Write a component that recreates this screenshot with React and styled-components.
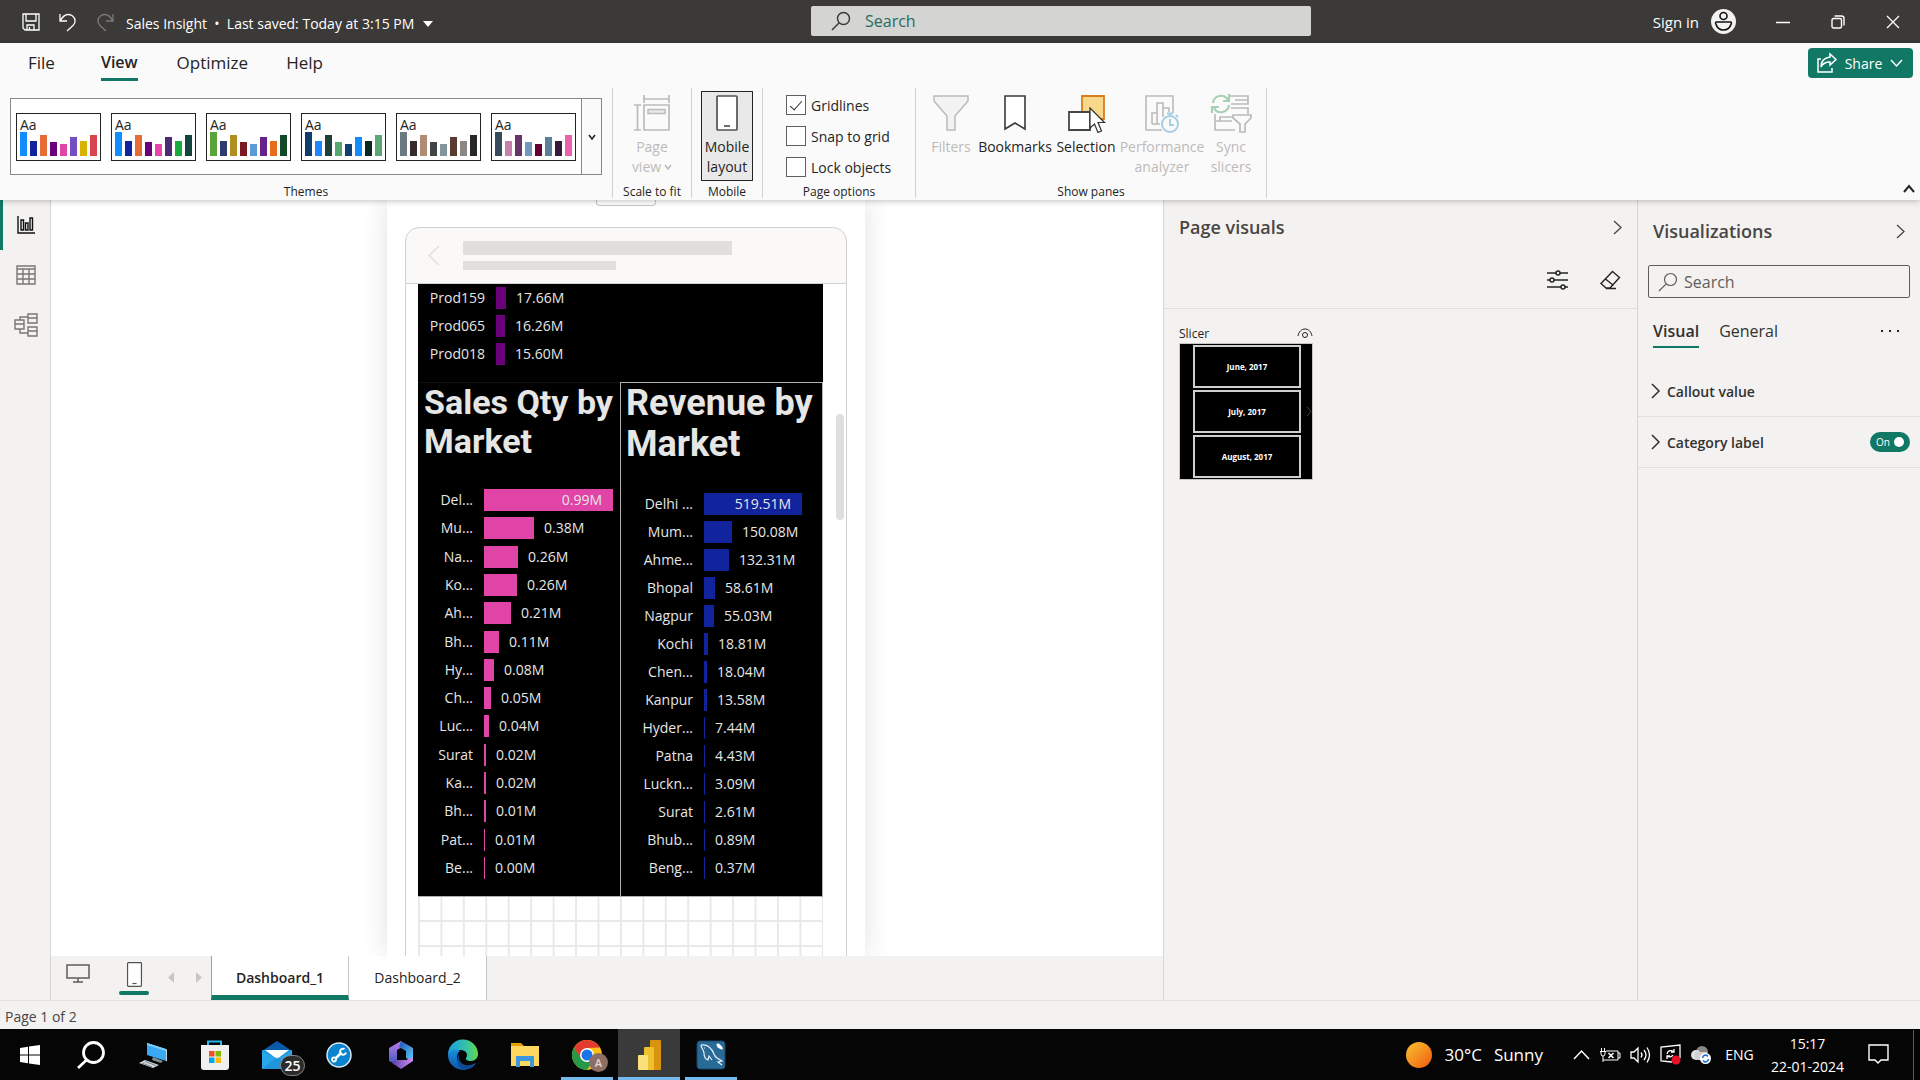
import React from "react";
import styled, { createGlobalStyle, css } from "styled-components";

const GlobalStyle = createGlobalStyle`
  *, *::before, *::after { box-sizing: border-box; }
  html, body { margin: 0; padding: 0; }
  body { overflow: hidden; }
  body, button, input { font-family: "Open Sans", "Noto Sans", sans-serif; }
  button { border: 0; background: none; padding: 0; margin: 0; color: inherit; font-size: inherit; cursor: pointer; }
  ul, h1, h2, h3, p { margin: 0; padding: 0; list-style: none; font-weight: 400; }
`;

const GREEN = "#117865";

const Icon = styled.svg.attrs((p) => ({
  width: p.$w,
  height: p.$h ?? p.$w,
  viewBox: p.viewBox ?? `0 0 ${p.$w} ${p.$h ?? p.$w}`,
  "aria-hidden": true,
}))`
  display: block;
  flex: none;
  overflow: visible;
  fill: none;
  stroke: currentColor;
  stroke-width: ${(p) => p.$s ?? 1};
`;

const Screen = styled.div`
  display: flex;
  flex-direction: column;
  height: 100vh;
  color: #252423;
  background: #f3f2f1;
  font-size: 14px;
`;

/* ---------- title bar ---------- */

const TitleBar = styled.header`
  display: grid;
  grid-template-columns: 1fr 500px 609px;
  align-items: center;
  height: 43px;
  flex: none;
  padding-left: 22px;
  background: #3b3a38;
  color: #fff;
`;

const QuickAccess = styled.div`
  display: flex;
  align-items: center;
  gap: 19px;
  font-size: 14px;
  line-height: 20px;
`;

const QuickButton = styled.button`
  color: ${(p) => (p.$muted ? "#7d7b79" : "#fff")};
`;

const FileButton = styled.button`
  display: flex;
  align-items: center;
  gap: 8px;
  margin-left: -7px;
  padding-top: 4px;
  color: #fff;
  white-space: nowrap;
`;

const AppSearch = styled.label`
  display: flex;
  align-items: center;
  gap: 14px;
  height: 30px;
  padding: 0 20px;
  margin: 0 0 2px;
  border-radius: 2px;
  background: #d4d4d2;
  color: #3b3a38;
`;

const SearchInput = styled.input`
  flex: 1;
  min-width: 0;
  padding: 0;
  border: 0;
  outline: 0;
  background: none;
  font-size: 16px;
  color: #323130;
  &::placeholder { color: ${(p) => p.$hint}; opacity: 1; }
`;

const WindowTools = styled.div`
  display: flex;
  align-items: center;
  justify-content: flex-end;
`;

const SignIn = styled.button`
  display: flex;
  align-items: center;
  gap: 12px;
  margin-right: 19px;
  color: #fff;
  font-size: 15px;
`;

const WindowButton = styled.button`
  display: grid;
  place-items: center;
  width: 55px;
  height: 43px;
  color: #fff;
`;

/* ---------- ribbon ---------- */

const Ribbon = styled.section`
  position: relative;
  z-index: 2;
  flex: none;
  height: 157px;
  background: #fafafa;
  box-shadow: 0 1px 6px rgba(0, 0, 0, 0.25);
`;

const RibbonTop = styled.div`
  display: flex;
  align-items: flex-start;
  justify-content: space-between;
  height: 45px;
  padding: 0 7px 0 28px;
`;

const RibbonTabs = styled.nav`
  display: flex;
`;

const RibbonTab = styled.button`
  height: 38px;
  margin-right: ${(p) => p.$after ?? 0}px;
  padding-top: 3px;
  border-bottom: 3px solid ${(p) => (p.$active ? GREEN : "transparent")};
  font-size: ${(p) => (p.$active ? 16 : 17)}px;
  font-weight: ${(p) => (p.$active ? 600 : 400)};
  color: #252423;
`;

const ShareButton = styled.button`
  display: flex;
  align-items: center;
  justify-content: space-between;
  width: 105px;
  height: 30px;
  margin-top: 5px;
  padding: 0 10px 0 9px;
  border-radius: 4px;
  background: ${GREEN};
  color: #fff;
  font-size: 14px;
`;

const RibbonBody = styled.div`
  display: flex;
  height: 112px;
`;

const Group = styled.section`
  display: flex;
  flex-direction: column;
  justify-content: space-between;
  width: ${(p) => p.$w}px;
  height: 110px;
  border-right: 1px solid #d2d0ce;
`;

const GroupBody = styled.div`
  display: flex;
  justify-content: center;
  gap: 1px;
  padding-top: ${(p) => p.$top ?? 3}px;
`;

const Caption = styled.h3`
  margin-bottom: -2px;
  font-size: 12px;
  line-height: 16px;
  text-align: center;
  white-space: nowrap;
`;

const Gallery = styled.div`
  display: flex;
  height: 77px;
  border: 1px solid #8a8886;
  background: #fff;
`;

const Swatches = styled.div`
  display: flex;
  align-items: center;
  gap: 10px;
  padding: 0 5px;
`;

const Swatch = styled.button`
  width: 85px;
  height: 48px;
  padding: 4px 3px;
  border: 1px solid #252423;
  background: #fff;
  text-align: left;
`;

const SwatchText = styled.span`
  display: block;
  height: 14px;
  font-size: 14px;
  line-height: 14px;
`;

const SwatchBars = styled.span`
  display: flex;
  align-items: flex-end;
  gap: 3px;
  height: 24px;
`;

const SwatchBar = styled.span`
  width: 7px;
`;

const GalleryMore = styled.button`
  display: grid;
  place-items: center;
  width: 20px;
  border-left: 1px solid #8a8886;
  background: #fafafa;
`;

const ToolButton = styled.button`
  position: relative;
  display: flex;
  flex-direction: column;
  align-items: center;
  gap: 6px;
  width: ${(p) => p.$w}px;
  height: 90px;
  padding-top: 3px;
  border: 1px solid ${(p) => (p.$pressed ? "#252423" : "transparent")};
  background: ${(p) => (p.$pressed ? "#e9e9e9" : "transparent")};
  color: ${(p) => (p.disabled ? "#bdbbb9" : "#252423")};
  font-size: 14px;
  line-height: 20px;
`;

const ToolLabel = styled.span`
  display: flex;
  flex-direction: column;
  align-items: center;
  white-space: nowrap;
`;

const WithChevron = styled.span`
  display: flex;
  align-items: center;
  gap: 3px;
`;

const Pointer = styled.span`
  position: absolute;
  left: 34px;
  top: 15px;
`;

const Options = styled.div`
  display: flex;
  flex-direction: column;
  gap: 11px;
  padding: 7px 0 0 23px;
`;

const Option = styled.label`
  display: flex;
  align-items: center;
  gap: 5px;
  height: 20px;
  font-size: 14px;
  white-space: nowrap;
`;

const Tick = styled.input`
  appearance: none;
  width: 20px;
  height: 20px;
  margin: 0;
  border: 1px solid #605e5c;
  background: #fff;
  display: grid;
  place-items: center;
  &:checked::before {
    content: "";
    width: 6px;
    height: 12px;
    margin-top: -3px;
    border: solid #323130;
    border-width: 0 1px 1px 0;
    transform: rotate(42deg);
  }
`;

const Collapse = styled.button`
  margin: auto 5px 7px auto;
`;

/* ---------- workspace ---------- */

const Workspace = styled.main`
  display: flex;
  flex: 1;
  min-height: 0;
  border-bottom: 1px solid #e1dfdd;
`;

const Rail = styled.nav`
  display: flex;
  flex-direction: column;
  width: 51px;
  border-right: 1px solid #d8d6d4;
`;

const RailButton = styled.button`
  display: grid;
  place-items: center;
  height: 50px;
  border-left: 3px solid ${(p) => (p.$active ? GREEN : "transparent")};
  padding: 0 2px 1px 0;
  color: ${(p) => (p.$active ? "#111" : "#797775")};
`;

const Center = styled.section`
  display: flex;
  flex: 1;
  flex-direction: column;
  min-width: 0;
`;

const Canvas = styled.div`
  display: flex;
  flex: 1;
  justify-content: center;
  min-height: 0;
  padding-left: 38px;
  overflow: hidden;
  background: #fff;
`;

const Sheet = styled.div`
  display: flex;
  flex-direction: column;
  width: 478px;
  padding: 0 18px;
  background: #fff;
  box-shadow: 0 0 26px rgba(0, 0, 0, 0.12);
`;

const SheetHandle = styled.div`
  align-self: center;
  width: 60px;
  height: 6px;
  margin-bottom: 21px;
  border: 1px solid #c8c6c4;
  border-top: 0;
  border-radius: 0 0 4px 4px;
`;

const PhoneHeader = styled.div`
  display: flex;
  align-items: center;
  gap: 23px;
  height: 57px;
  flex: none;
  padding-left: 22px;
  border: 1px solid #d2d0ce;
  border-radius: 14px 14px 0 0;
  background: #faf9f8;
  color: #e1dfdd;
`;

const Placeholders = styled.div`
  display: flex;
  flex-direction: column;
  gap: 6px;
`;

const Placeholder = styled.div`
  width: ${(p) => p.$w}px;
  height: ${(p) => p.$h}px;
  background: #e1dfdd;
`;

const PhoneBody = styled.div`
  display: flex;
  flex: 1;
  min-height: 0;
  gap: 13px;
  padding: 0 2px 0 12px;
  border: solid #d2d0ce;
  border-width: 0 1px;
`;

const Report = styled.div`
  display: flex;
  flex: 1;
  flex-direction: column;
`;

const ScrollThumb = styled.div`
  width: 8px;
  height: 106px;
  margin-top: 130px;
  border-radius: 4px;
  background: #e1dfdd;
`;

const Products = styled.div`
  height: 98px;
  background: #000;
`;

const MarketRow = styled.div`
  display: grid;
  grid-template-columns: 202px 1fr;
  height: 515px;
  border-top: 1px solid #111;
  border-bottom: 1px solid #b3b0ad;
  background: #000;
`;

const MarketCard = styled.section`
  display: flex;
  flex-direction: column;
  justify-content: space-between;
  padding-bottom: 14px;
  ${(p) =>
    p.$selected &&
    css`
      border: solid #b3b0ad;
      border-width: 1px 1px 0;
      margin-top: -1px;
    `}
`;

const ChartTitle = styled.h2`
  padding-left: ${(p) => (p.$large ? 5 : 6)}px;
  font-family: Roboto, sans-serif;
  font-weight: 700;
  font-size: ${(p) => (p.$large ? 36 : 34)}px;
  line-height: ${(p) => (p.$large ? 41 : 39)}px;
  color: #e6e6e6;
`;

const BarList = styled.ul`
  display: flex;
  flex-direction: column;
  height: ${(p) => p.$h}px;
`;

const BarRow = styled.li`
  display: flex;
  flex: 1;
  align-items: center;
  gap: 10px;
  color: #e6e6e6;
  font-size: 14px;
  line-height: 20px;
  white-space: nowrap;
`;

const BarLabel = styled.span`
  width: ${(p) => p.$w}px;
  padding-right: 1px;
  text-align: right;
`;

const Bar = styled.span`
  display: flex;
  align-items: center;
  justify-content: flex-end;
  height: 22px;
  padding-right: ${(p) => (p.$inside ? 11 : 0)}px;
  background: ${(p) => p.$color};
`;

const SnapGrid = styled.div`
  flex: 1;
  background-image:
    linear-gradient(to right, #e9e9e9 2px, transparent 2px),
    linear-gradient(to top, #e9e9e9 2px, transparent 2px);
  background-size: calc(100% / 18) 25px;
  border-right: 1px solid #e9e9e9;
`;

/* ---------- page tabs ---------- */

const PageBar = styled.div`
  display: flex;
  height: 44px;
  flex: none;
  align-items: stretch;
  color: #605e5c;
`;

const ViewButton = styled.button`
  display: flex;
  flex-direction: column;
  align-items: center;
  width: ${(p) => p.$w}px;
  padding-top: ${(p) => p.$top}px;
  gap: 4px;
`;

const Underline = styled.span`
  width: 30px;
  height: 4px;
  border-radius: 2px;
  background: ${GREEN};
`;

const Arrows = styled.div`
  display: flex;
  align-items: center;
  gap: 22px;
  padding: 0 9px 2px 5px;
  color: #c8c6c4;
`;

const PageTab = styled.button`
  width: 138px;
  padding: ${(p) => (p.$active ? "4px 0 0" : "0 0 1px")};
  border-right: 1px solid #c8c6c4;
  border-left: ${(p) => (p.$active ? "1px solid #a19f9d" : "0")};
  border-bottom: ${(p) => (p.$active ? `5px solid ${GREEN}` : "0")};
  background: #fff;
  color: #252423;
  font-size: 14px;
  font-weight: ${(p) => (p.$active ? 600 : 400)};
`;

/* ---------- side panes ---------- */

const Pane = styled.aside`
  display: flex;
  flex-direction: column;
  width: ${(p) => p.$w}px;
  flex: none;
  border-left: 1px solid #d8d6d4;
`;

const PaneHeader = styled.div`
  display: flex;
  align-items: center;
  justify-content: space-between;
  height: ${(p) => p.$h}px;
  padding: 0 15px 3px;
  color: #484644;
`;

const PaneTitle = styled.h2`
  font-size: 18px;
  font-weight: 600;
`;

const PaneTools = styled.div`
  display: flex;
  align-items: flex-start;
  justify-content: flex-end;
  gap: 32px;
  height: 52px;
  padding: 13px 16px 0;
  border-bottom: 1px solid #e1dfdd;
`;

const VisualTile = styled.figure`
  width: 134px;
  margin: 15px 0 0 15px;
`;

const TileCaption = styled.figcaption`
  display: flex;
  align-items: center;
  justify-content: space-between;
  height: 19px;
  font-size: 12px;
`;

const SlicerCard = styled.div`
  position: relative;
  display: flex;
  flex-direction: column;
  gap: 2px;
  padding: 1px 11px 1px 13px;
  border: 1px solid #c8c6c4;
  background: #000;
  color: #fff;
`;

const SlicerItem = styled.button`
  height: 43px;
  border: 2px solid #cfcfcf;
  font-size: 8px;
  font-weight: 700;
`;

const SlicerNext = styled.span`
  position: absolute;
  right: 0;
  top: 62px;
  color: #484644;
`;

const PaneSearch = styled.label`
  display: flex;
  align-items: center;
  gap: 6px;
  height: 33px;
  margin: 0 10px;
  padding: 0 9px;
  border: 1px solid #605e5c;
  border-radius: 2px;
  color: #605e5c;
`;

const PaneTabs = styled.div`
  display: flex;
  align-items: flex-start;
  gap: 20px;
  height: 68px;
  padding: 18px 20px 0 15px;
`;

const PaneTab = styled.button`
  height: 32px;
  border-bottom: 2px solid ${(p) => (p.$active ? GREEN : "transparent")};
  font-size: 16px;
  font-weight: ${(p) => (p.$active ? 600 : 400)};
  color: #323130;
`;

const More = styled.button`
  margin: 14px 0 0 auto;
`;

const Section = styled.div`
  display: flex;
  align-items: center;
  height: 51px;
  padding: 0 10px 0 13px;
  border-bottom: 1px solid #e1dfdd;
`;

const Expander = styled.button`
  display: flex;
  flex: 1;
  align-items: center;
  gap: 7px;
  font-size: 14px;
  font-weight: 600;
  color: #323130;
`;

const Toggle = styled.label`
  display: flex;
  align-items: center;
  justify-content: space-between;
  width: 40px;
  height: 20px;
  padding: 0 6px;
  border-radius: 10px;
  background: ${GREEN};
  color: #fff;
  font-size: 10px;
`;

const Knob = styled.input`
  appearance: none;
  width: 10px;
  height: 10px;
  margin: 0;
  border-radius: 5px;
  background: #fff;
`;

const StatusBar = styled.footer`
  height: 28px;
  flex: none;
  padding: 6px 5px 0;
  font-size: 14px;
  line-height: 20px;
  color: #484644;
`;

/* ---------- taskbar ---------- */

const TaskbarShell = styled.footer`
  display: flex;
  justify-content: space-between;
  height: 51px;
  flex: none;
  background: #050505;
  color: #fff;
`;

const Apps = styled.div`
  display: flex;
`;

const AppButton = styled.button`
  position: relative;
  display: grid;
  place-items: center;
  width: 62px;
  background: ${(p) => (p.$active ? "#3a3a3a" : "transparent")};
  &:first-child { width: 60px; }
  ${(p) =>
    p.$running &&
    css`
      &::after {
        content: "";
        position: absolute;
        left: ${p.$active ? 0 : 5}px;
        right: ${p.$active ? 0 : 5}px;
        bottom: 0;
        height: 3px;
        background: #76b9ed;
      }
    `}
`;

const Badge = styled.span`
  position: absolute;
  right: ${(p) => (p.$round ? 10 : 3)}px;
  bottom: ${(p) => (p.$round ? 8 : 4)}px;
  display: grid;
  place-items: center;
  width: ${(p) => (p.$round ? 19 : 25)}px;
  height: ${(p) => (p.$round ? 19 : 21)}px;
  border-radius: 12px;
  border: ${(p) => (p.$round ? "0" : "1px solid #8a8886")};
  background: ${(p) => (p.$round ? "#8d6e63" : "#2b2b2b")};
  font-size: ${(p) => (p.$round ? 11 : 14)}px;
  font-weight: 600;
  color: ${(p) => (p.$round ? "#e0d5d1" : "#fff")};
`;

const Tray = styled.div`
  display: flex;
  align-items: center;
`;

const Weather = styled.button`
  display: flex;
  align-items: center;
  gap: 12px;
  margin-right: 30px;
  font-size: 17px;
  color: #fff;
`;

const TrayIcons = styled.div`
  display: flex;
  align-items: center;
  gap: 10px;
  width: 138px;
`;

const Language = styled.button`
  margin-left: 14px;
  width: 29px;
  font-size: 14px;
`;

const Clock = styled.time`
  width: 79px;
  margin: 0 21px 0 14px;
  font-size: 14px;
  line-height: 23px;
  text-align: center;
  white-space: nowrap;
`;

const Notifications = styled.button`
  margin-right: 24px;
`;

const DesktopEdge = styled.div`
  width: 7px;
  height: 50px;
  border-left: 1px solid #5a5a5a;
`;

/* ---------- data ---------- */

const THEMES = [
  ["#118dff", "#12239e", "#e66c37", "#6b007b", "#e044a7", "#744ec2", "#d9b300", "#d64550"],
  ["#118dff", "#12239e", "#e66c37", "#6b007b", "#e645ab", "#4b2b77", "#1aab40", "#15443f"],
  ["#5ba33b", "#2f3a6e", "#b08e1f", "#7b1824", "#5b9bd5", "#671f8b", "#e66c1b", "#144a28"],
  ["#0f3d70", "#1f85ff", "#1d4038", "#57a773", "#103f70", "#118dff", "#0c2622", "#5ba774"],
  ["#6b7a80", "#352a2c", "#b08c73", "#404647", "#84949c", "#5a3b32", "#8b8784", "#272828"],
  ["#374b5c", "#c77fab", "#663566", "#7299bb", "#660033", "#5b8199", "#36193b", "#ea60aa"],
];
const BAR_HEIGHTS = [24, 15, 21, 14, 12, 19, 15, 21];

const PRODUCTS = [
  ["Prod159", "17.66M", 10],
  ["Prod065", "16.26M", 9],
  ["Prod018", "15.60M", 9],
];
const SALES_QTY = [
  ["Del...", "0.99M", 129], ["Mu...", "0.38M", 50], ["Na...", "0.26M", 34], ["Ko...", "0.26M", 33],
  ["Ah...", "0.21M", 27], ["Bh...", "0.11M", 15], ["Hy...", "0.08M", 10], ["Ch...", "0.05M", 7],
  ["Luc...", "0.04M", 5], ["Surat", "0.02M", 2], ["Ka...", "0.02M", 2], ["Bh...", "0.01M", 2],
  ["Pat...", "0.01M", 1], ["Be...", "0.00M", 1],
];
const REVENUE = [
  ["Delhi ...", "519.51M", 98], ["Mum...", "150.08M", 28], ["Ahme...", "132.31M", 25], ["Bhopal", "58.61M", 11],
  ["Nagpur", "55.03M", 10], ["Kochi", "18.81M", 4], ["Chen...", "18.04M", 3], ["Kanpur", "13.58M", 3],
  ["Hyder...", "7.44M", 1], ["Patna", "4.43M", 1], ["Luckn...", "3.09M", 1], ["Surat", "2.61M", 1],
  ["Bhub...", "0.89M", 1], ["Beng...", "0.37M", 1],
];

function BarChart({ rows, color, labelWidth, height, firstInside }) {
  return (
    <BarList $h={height}>
      {rows.map(([name, value, width], i) => {
        const inside = firstInside && i === 0;
        return (
          <BarRow key={name + i}>
            <BarLabel $w={labelWidth}>{name}</BarLabel>
            <Bar $color={color} $inside={inside} style={{ width }}>
              {inside && value}
            </Bar>
            {!inside && <span>{value}</span>}
          </BarRow>
        );
      })}
    </BarList>
  );
}

/* ---------- icons ---------- */

const Chevron = ({ dir = "down", w = 12, h = 7, s = 1 }) => {
  const d = {
    down: `M1 1L${w / 2} ${h - 1}L${w - 1} 1`,
    up: `M1 ${h - 1}L${w / 2} 1L${w - 1} ${h - 1}`,
    right: `M1 1L${w - 1} ${h / 2}L1 ${h - 1}`,
    left: `M${w - 1} 1L1 ${h / 2}L${w - 1} ${h - 1}`,
  }[dir];
  return <Icon $w={w} $h={h} $s={s}><path d={d} /></Icon>;
};

const Magnifier = ({ s = 1.5 }) => (
  <Icon $w={20} $s={s}><circle cx="12.5" cy="7.5" r="6" /><path d="M8.2 11.8L1 19" /></Icon>
);

const PageViewIcon = () => (
  <Icon $w={36} $s={1.7}>
    <path d="M10 0v8M35 0v8M10 4h25M0 10h7M0 35h7M3.5 10v25M10 10h25v25H10z" />
    <path d="M14 14.5h17v4H14z" fill="#e9e9e9" strokeWidth="1.5" />
  </Icon>
);
const MobileIcon = ({ w = 22, h = 36, s = 1.7 }) => (
  <Icon $w={w} $h={h} $s={s} viewBox="0 0 22 36" stroke="#484644"><rect x="1" y="1" width="20" height="34" rx="1" fill="#fff" stroke="#555351" /><path d="M8 31h6" stroke="#555351" /></Icon>
);
const FilterIcon = () => (
  <Icon $w={36} $s={1.5}><path d="M1 1h34v5L22 21v14h-8V21L1 6z" fill="#f3f3f3" /></Icon>
);
const BookmarkIcon = () => (
  <Icon $w={22} $h={36} $s={1.6}><path d="M1 1h20v33l-10-6-10 6z" fill="#fff" stroke="#3b3a38" /></Icon>
);
const SelectionIcon = () => (
  <Icon $w={37} $h={36} $s={1.8}>
    <path d="M14 1h22v23H14z" fill="#f8d98c" stroke="#d67f1c" />
    <path d="M1 17h21v18H1z" fill="#fff" stroke="#484644" />
  </Icon>
);
const PointerIcon = () => (
  <Icon $w={17} $h={27} $s={1.2}><path d="M1 1v20l4.5-4 3.5 8.5 3.5-1.5L9 15.5h6.5z" fill="#fff" stroke="#323130" /></Icon>
);
const PerformanceIcon = () => (
  <Icon $w={36} $s={1.6}>
    <path d="M18 35H2V1h27v17" /><path d="M8 29V18h5v11M13 29V8h6v14M8 29h8M19 13h6v4" />
    <g stroke="#a6cde4" strokeWidth="2"><circle cx="26" cy="29" r="8" fill="#fafafa" /><path d="M26 24v6h4M23 18.5h6M26 18v3M32 20l2 2" /></g>
  </Icon>
);
const SyncIcon = () => (
  <Icon $w={41} $h={36} viewBox="0 2 41 36" $s={1.7}>
    <path d="M19 3h18v8H20M24 7h13M20 15h17v6M4 21v16h20M4 28h17M9 28v-4h13" />
    <path d="M22 22h18v3l-6 6v8h-5v-8l-7-6z" fill="#fafafa" />
    <g stroke="#a9cfb4" strokeWidth="2.2"><path d="M2 10a8 8 0 0 1 15-3M18 1v7h-6M18 12a8 8 0 0 1-15 3M1 20v-6h7" /></g>
  </Icon>
);

const TASK_ICONS = {
  Start: <Icon $w={20}><path d="M0 3l8-1.2V9.500H0zM9 1.600L20 0v9.500H9zM0 10.500h8v7.800L0 17zM9 10.500h11V20L9 18.400z" fill="#fff" stroke="none" /></Icon>,
  Search: <Icon $w={28} $s={2.8}><circle cx="16.500" cy="11.500" r="10" stroke="#fff" /><path d="M9.500 19L1 27" stroke="#fff" /></Icon>,
  "This PC": (
    <Icon $w={28}><g stroke="none"><path d="M8 2l19 6v12L8 14z" fill="#39a9f4" /><path d="M27 8l1 .5V20l-1 .5z" fill="#c6d5de" /><path d="M8 2l19 6v2L8 4z" fill="#83cdf8" /><path d="M14 16l10 4-2 2-9-3z" fill="#7d8b94" /><path d="M0 22l6-3 14 5-6 3z" fill="#cfd8dd" /><path d="M3 22l10 4M6 20.500l11 4" stroke="#7c878e" /></g></Icon>
  ),
  Store: (
    <Icon $w={30}><path d="M8 7V1.500h13V7" stroke="#2bb4ee" strokeWidth="2" /><g stroke="none"><path d="M1 5h28v22q0 3-3 3H4q-3 0-3-3z" fill="#f0f0f0" /><path d="M9 11h5.500v5.500H9z" fill="#f25022" /><path d="M15.500 11H21v5.500h-5.500z" fill="#7fba00" /><path d="M9 17.500h5.500V23H9z" fill="#00a4ef" /><path d="M15.500 17.500H21V23h-5.500z" fill="#ffb900" /></g></Icon>
  ),
  Mail: (
    <Icon $w={30}><g stroke="none"><path d="M0 11L15 1l15 10z" fill="#0a5ba8" /><path d="M0 10h30v19H0z" fill="#1e9be0" /><path d="M3 10h24l-12 9z" fill="#fff" /><path d="M0 11l15 9 15-9v18H0z" fill="#28a8ea" /><path d="M0 29l15-12 15 12z" fill="#1683cc" opacity=".5" /></g></Icon>
  ),
  Tools: (
    <Icon $w={26}><circle cx="13" cy="13" r="12" fill="#0a84cf" stroke="#d9e8f2" strokeWidth="1.5" /><path d="M9.500 16.500l6-6" stroke="#fff" strokeWidth="2.5" /><circle cx="8" cy="17.500" r="2" stroke="#fff" strokeWidth="1.800" /><path d="M18.500 7a3 3 0 1 0 1.500 3.500" stroke="#fff" strokeWidth="2" /></Icon>
  ),
  Office: (
    <Icon $w={28}>
      <defs>
        <linearGradient id="of1" x1="0" y1="0" x2="0" y2="1"><stop offset="0" stopColor="#c07cf0" /><stop offset="1" stopColor="#4758c0" /></linearGradient>
        <linearGradient id="of2" x1="0" y1="0" x2="1" y2="1"><stop offset="0" stopColor="#1f4fb5" /><stop offset="1" stopColor="#5ed0f5" /></linearGradient>
        <linearGradient id="of3"><stop offset="0" stopColor="#5b3fa8" /><stop offset="1" stopColor="#cf8df0" /></linearGradient>
      </defs>
      <g stroke="none"><path d="M14 0L2 7v13l4 2 4-3V9l7-4z" fill="url(#of1)" /><path d="M14 0l12 7v13l-7-3v-7l-7-4z" fill="url(#of2)" /><path d="M26 20l-12 8-9-6 5-3h9l7-3z" fill="url(#of3)" /></g>
    </Icon>
  ),
  Edge: (
    <Icon $w={30}>
      <defs>
        <linearGradient id="ed1"><stop offset="0" stopColor="#1b9de2" /><stop offset=".6" stopColor="#35c1a8" /><stop offset="1" stopColor="#63dc46" /></linearGradient>
        <linearGradient id="ed2" x1="0" y1="0" x2="0" y2="1"><stop offset="0" stopColor="#1b8fdc" /><stop offset="1" stopColor="#0d54a8" /></linearGradient>
      </defs>
      <g stroke="none"><path d="M0 15a15 15 0 0 1 30-1c0 4-3 7-7 7-3 0-6-1-5-3 3-4-1-8-5-8C6 10 1 12 0 15z" fill="url(#ed1)" /><path d="M0 15C1 10 8 8 12 11c-5 3-4 12 3 14 5 2 9 0 13-2-3 5-8 7-13 7A15 15 0 0 1 0 15z" fill="url(#ed2)" /><path d="M12 13c-3 5 0 11 6 12 4 1 8-1 9-2-3 5-8 7-12 6-6-2-8-11-3-16z" fill="#0c4a92" /></g>
    </Icon>
  ),
  Explorer: (
    <Icon $w={28} $h={26}><g stroke="none"><path d="M0 1h10l3 3h15v20H0z" fill="#e8a000" /><path d="M0 4h28v20H0z" fill="#ffd75e" /><path d="M5 14h18v11h-4v-6H9v6H5z" fill="#3b96dd" /></g></Icon>
  ),
  Chrome: (
    <Icon $w={30}><g stroke="none"><circle cx="15" cy="15" r="15" fill="#fbc116" /><path d="M2 7.500A15 15 0 0 1 28 7.500L15 8 8.500 19z" fill="#e33b2e" /><path d="M2 7.500A15 15 0 0 0 15 30l7-11-13-.5z" fill="#279847" /><circle cx="15" cy="15" r="7" fill="#fff" /><circle cx="15" cy="15" r="5.500" fill="#1a73e8" /></g></Icon>
  ),
  "Power BI": (
    <Icon $w={24} $h={30}><g stroke="none"><path d="M13 1q0-1 1-1h9q1 0 1 1v28q0 1-1 1H13z" fill="#d9940f" /><path d="M7 8q0-1 1-1h8q1 0 1 1v22H7z" fill="#efc12c" /><path d="M1 16q0-1 1-1h8q1 0 1 1v14H2q-1 0-1-1z" fill="#f9e07a" /></g></Icon>
  ),
  Workbench: (
    <Icon $w={30}><rect x="1" y="1" width="28" height="28" rx="3" fill="#2a6a96" stroke="#184766" /><path d="M5 5c7-1 11 4 13 9 1 4 5 5 8 7l-4 1 4 3M5 5c0 3 3 5 3 8s1 6 4 7l1-4 3 4M8 8h1" stroke="#e4f0f8" strokeWidth="1.2" /><path d="M22 4l4 4M21 4l1.500 3 4 2" stroke="#fff" strokeWidth="1.800" /></Icon>
  ),
};

const APPS = [
  { name: "Start" }, { name: "Search" }, { name: "This PC" }, { name: "Store" },
  { name: "Mail", badge: "25" }, { name: "Tools" }, { name: "Office" }, { name: "Edge" },
  { name: "Explorer" }, { name: "Chrome", running: true, badge: "A", round: true },
  { name: "Power BI", running: true, active: true }, { name: "Workbench", running: true },
];

/* ---------- sections ---------- */

function Header() {
  return (
    <TitleBar>
      <QuickAccess>
        <QuickButton aria-label="Save"><Icon $w={18} $s={1.3}><path d="M1 1h16v16H3l-2-2zM4 1v7h10V1M5 17v-5h7v5M7.500 14v3" /></Icon></QuickButton>
        <QuickButton aria-label="Undo"><Icon $w={18} $s={1.3}><path d="M1 1v7h7M1.500 7.500C5 1 9 .5 13 2.500c4 3 4 7 1 10L8 18" /></Icon></QuickButton>
        <QuickButton aria-label="Redo" $muted><Icon $w={18} $s={1.3}><path d="M17 1v7h-7M16.500 7.500C13 1 9 .5 5 2.500c-4 3-4 7-1 10L10 18" /></Icon></QuickButton>
        <FileButton>
          <span>Sales Insight&nbsp; • &nbsp;Last saved: Today at 3:15 PM</span>
          <Icon $w={12} $h={6}><path d="M1 0h10L6 6z" fill="#fff" stroke="none" /></Icon>
        </FileButton>
      </QuickAccess>
      <AppSearch>
        <Magnifier />
        <SearchInput aria-label="Search" placeholder="Search" $hint="#2b6b5e" />
      </AppSearch>
      <WindowTools>
        <SignIn>
          Sign in
          <Icon $w={25} $s={1.6}><circle cx="12.500" cy="12.500" r="12.500" fill="#f3f2f1" stroke="none" /><circle cx="12.500" cy="7" r="3.500" stroke="#111" /><path d="M5.500 13h14c.8 0 1 .6.800 1.500C19 19 16 21 12.500 21S6 19 4.700 14.500C4.500 13.600 4.700 13 5.500 13z" stroke="#111" /></Icon>
        </SignIn>
        <WindowButton aria-label="Minimize"><Icon $w={14} $s={1.5}><path d="M0 7.500h14" /></Icon></WindowButton>
        <WindowButton aria-label="Restore"><Icon $w={14} $s={1.4}><rect x="1" y="3.500" width="9.500" height="9.500" rx="1.500" /><path d="M3.500 1h7Q13 1 13 3.500v7" /></Icon></WindowButton>
        <WindowButton aria-label="Close"><Icon $w={14} $s={1.3}><path d="M1 1l12 12M13 1L1 13" /></Icon></WindowButton>
      </WindowTools>
    </TitleBar>
  );
}

function RibbonArea() {
  return (
    <Ribbon>
      <RibbonTop>
        <RibbonTabs>
          <RibbonTab $after={46}>File</RibbonTab>
          <RibbonTab $active $after={39}>View</RibbonTab>
          <RibbonTab $after={38}>Optimize</RibbonTab>
          <RibbonTab>Help</RibbonTab>
        </RibbonTabs>
        <ShareButton>
          <Icon $w={20} $s={1.5}><path d="M4 6H1v13h14v-4M13 1l6 5.500L13 12V9c-4 0-7 1-9 5 0-5 3-9 9-10z" /></Icon>
          Share
          <Chevron w={13} h={8} s={1.5} />
        </ShareButton>
      </RibbonTop>
      <RibbonBody>
        <Group $w={613}>
          <GroupBody $top={10}>
            <Gallery>
              <Swatches>
                {THEMES.map((colors, i) => (
                  <Swatch key={i} aria-label={`Theme ${i + 1}`}>
                    <SwatchText>Aa</SwatchText>
                    <SwatchBars>
                      {colors.map((c, j) => (
                        <SwatchBar key={j} style={{ height: BAR_HEIGHTS[j], background: c }} />
                      ))}
                    </SwatchBars>
                  </Swatch>
                ))}
              </Swatches>
              <GalleryMore aria-label="More themes"><Chevron w={8} h={6} s={1.6} /></GalleryMore>
            </Gallery>
          </GroupBody>
          <Caption>Themes</Caption>
        </Group>
        <Group $w={79}>
          <GroupBody>
            <ToolButton $w={60} disabled>
              <PageViewIcon />
              <ToolLabel><span>Page</span><WithChevron>view <Chevron w={8} h={6} s={1.6} /></WithChevron></ToolLabel>
            </ToolButton>
          </GroupBody>
          <Caption>Scale to fit</Caption>
        </Group>
        <Group $w={71}>
          <GroupBody>
            <ToolButton $w={52} $pressed>
              <MobileIcon />
              <ToolLabel><span>Mobile</span><span>layout</span></ToolLabel>
            </ToolButton>
          </GroupBody>
          <Caption>Mobile</Caption>
        </Group>
        <Group $w={153}>
          <Options>
            <Option><Tick type="checkbox" defaultChecked />Gridlines</Option>
            <Option><Tick type="checkbox" />Snap to grid</Option>
            <Option><Tick type="checkbox" />Lock objects</Option>
          </Options>
          <Caption>Page options</Caption>
        </Group>
        <Group $w={351}>
          <GroupBody>
            <ToolButton $w={50} disabled><FilterIcon /><ToolLabel>Filters</ToolLabel></ToolButton>
            <ToolButton $w={76}><BookmarkIcon /><ToolLabel>Bookmarks</ToolLabel></ToolButton>
            <ToolButton $w={64}>
              <SelectionIcon /><ToolLabel>Selection</ToolLabel>
              <Pointer><PointerIcon /></Pointer>
            </ToolButton>
            <ToolButton $w={86} disabled><PerformanceIcon /><ToolLabel><span>Performance</span><span>analyzer</span></ToolLabel></ToolButton>
            <ToolButton $w={50} disabled><SyncIcon /><ToolLabel><span>Sync</span><span>slicers</span></ToolLabel></ToolButton>
          </GroupBody>
          <Caption>Show panes</Caption>
        </Group>
        <Collapse aria-label="Collapse ribbon"><Chevron dir="up" w={12} h={8} s={2} /></Collapse>
      </RibbonBody>
    </Ribbon>
  );
}

function LeftRail() {
  return (
    <Rail>
      <RailButton $active aria-label="Report view">
        <Icon $w={18} $s={1.4}><path d="M1 0v17h17M4 4h2.500v10H4zM8.500 7H11v7H8.500zM13 2h2.500v12H13z" /></Icon>
      </RailButton>
      <RailButton aria-label="Table view">
        <Icon $w={20} $s={1.4}><path d="M1 1h18v18H1zM1 4h18M1 9h18M1 14h18M7 4v15M13 4v15" /></Icon>
      </RailButton>
      <RailButton aria-label="Model view">
        <Icon $w={24} $s={1.4}><path d="M1 7h9v9H1zM1 11h9M14 1h9v9h-9zM14 5h9M14 14h9v9h-9zM14 18h9M6 7V4h8M6 16v4h8" /></Icon>
      </RailButton>
    </Rail>
  );
}

function CanvasArea() {
  return (
    <Center>
      <Canvas>
        <Sheet>
          <SheetHandle />
          <PhoneHeader>
            <Chevron dir="left" w={12} h={21} s={1.5} />
            <Placeholders>
              <Placeholder $w={269} $h={14} />
              <Placeholder $w={153} $h={9} />
            </Placeholders>
          </PhoneHeader>
          <PhoneBody>
            <Report>
              <Products>
                <BarChart rows={PRODUCTS} color="#6b007b" labelWidth={68} height={84} />
              </Products>
              <MarketRow>
                <MarketCard>
                  <ChartTitle>Sales Qty by Market</ChartTitle>
                  <BarChart rows={SALES_QTY} color="#e044a7" labelWidth={56} height={396} firstInside />
                </MarketCard>
                <MarketCard $selected>
                  <ChartTitle $large>Revenue by Market</ChartTitle>
                  <BarChart rows={REVENUE} color="#12239e" labelWidth={73} height={392} firstInside />
                </MarketCard>
              </MarketRow>
              <SnapGrid />
            </Report>
            <ScrollThumb />
          </PhoneBody>
        </Sheet>
      </Canvas>
      <PageBar>
        <ViewButton $w={54} $top={8} aria-label="Desktop layout">
          <Icon $w={24} $h={19} $s={1.5}><path d="M1 1h22v13H1zM12 14v4M7 18h10" /></Icon>
        </ViewButton>
        <ViewButton $w={58} $top={6} aria-label="Mobile layout">
          <MobileIcon w={17} h={25} />
          <Underline />
        </ViewButton>
        <Arrows>
          <button aria-label="Previous page"><Icon $w={6} $h={11}><path d="M6 0v11L0 5.500z" fill="currentColor" stroke="none" /></Icon></button>
          <button aria-label="Next page"><Icon $w={6} $h={11}><path d="M0 0v11l6-5.500z" fill="currentColor" stroke="none" /></Icon></button>
        </Arrows>
        <PageTab $active>Dashboard_1</PageTab>
        <PageTab>Dashboard_2</PageTab>
      </PageBar>
    </Center>
  );
}

function PageVisuals() {
  return (
    <Pane $w={474}>
      <PaneHeader $h={57}>
        <PaneTitle>Page visuals</PaneTitle>
        <button aria-label="Collapse page visuals"><Chevron dir="right" w={9} h={15} s={1.3} /></button>
      </PaneHeader>
      <PaneTools>
        <button aria-label="Visual options">
          <Icon $w={21} $h={20} $s={1.5}><path d="M0 3h9M13 3h8M0 10h3M7 10h14M0 17h14M18 17h3" /><circle cx="11" cy="3" r="2" /><circle cx="5" cy="10" r="2" /><circle cx="16" cy="17" r="2" /></Icon>
        </button>
        <button aria-label="Clear">
          <Icon $w={21} $h={20} $s={1.4}><path d="M12.500 1.500l7 6L10 18H6l-5-4.500zM5.500 9l8 6.500M6 18.500h10" /></Icon>
        </button>
      </PaneTools>
      <VisualTile>
        <TileCaption>
          Slicer
          <Icon $w={16} $h={11}><path d="M1 8C2 3 5 1 8 1s6 2 7 7" /><circle cx="8" cy="7" r="2.500" /></Icon>
        </TileCaption>
        <SlicerCard>
          <SlicerItem>June, 2017</SlicerItem>
          <SlicerItem>July, 2017</SlicerItem>
          <SlicerItem>August, 2017</SlicerItem>
          <SlicerNext><Chevron dir="right" w={6} h={11} /></SlicerNext>
        </SlicerCard>
      </VisualTile>
    </Pane>
  );
}

function Visualizations() {
  return (
    <Pane $w={283}>
      <PaneHeader $h={65}>
        <PaneTitle>Visualizations</PaneTitle>
        <button aria-label="Collapse visualizations"><Chevron dir="right" w={9} h={15} s={1.3} /></button>
      </PaneHeader>
      <PaneSearch>
        <Magnifier s={1.2} />
        <SearchInput aria-label="Search properties" placeholder="Search" $hint="#605e5c" />
      </PaneSearch>
      <PaneTabs>
        <PaneTab $active>Visual</PaneTab>
        <PaneTab>General</PaneTab>
        <More aria-label="More options"><Icon $w={19} $h={3}><path d="M0 0h2v2H0zM8 0h2v2H8zM16 0h2v2h-2z" fill="currentColor" stroke="none" /></Icon></More>
      </PaneTabs>
      <Section>
        <Expander><Chevron dir="right" w={9} h={16} s={1.5} />Callout value</Expander>
      </Section>
      <Section>
        <Expander><Chevron dir="right" w={9} h={16} s={1.5} />Category label</Expander>
        <Toggle>On<Knob type="checkbox" role="switch" aria-label="Category label" defaultChecked /></Toggle>
      </Section>
    </Pane>
  );
}

function Taskbar() {
  return (
    <TaskbarShell>
      <Apps>
        {APPS.map((app) => (
          <AppButton key={app.name} aria-label={app.name} $running={app.running} $active={app.active}>
            {TASK_ICONS[app.name]}
            {app.badge && <Badge $round={app.round}>{app.badge}</Badge>}
          </AppButton>
        ))}
      </Apps>
      <Tray>
        <Weather>
          <Icon $w={26}>
            <defs><linearGradient id="sun" x1="0" y1="0" x2="1" y2="1"><stop offset="0" stopColor="#f8c531" /><stop offset="1" stopColor="#f0590e" /></linearGradient></defs>
            <circle cx="13" cy="13" r="13" fill="url(#sun)" stroke="none" />
          </Icon>
          <span>30°C</span>
          <span>Sunny</span>
        </Weather>
        <TrayIcons>
          <Chevron dir="up" w={17} h={10} s={1.5} />
          <Icon $w={20} $h={14}><path d="M6 3h12v9H3M18 5h2v5h-2M3 8v6M1 3v3q0 2 2 2t2-2V3M1.500 0v3M4.500 0v3M0 3.500h6" /><path d="M8.500 5l5 5M13.500 5l-5 5" strokeWidth="1.5" /></Icon>
          <Icon $w={20} $h={18} $s={1.3}><path d="M1 6h3l4-4v14l-4-4H1zM11 6.500q2 2.500 0 5M14 4q4 5 0 10M17 1.500q5 7.500 0 15" /></Icon>
          <Icon $w={21} $s={1.3}><path d="M12 18L1 17V3l19-2v13M7 10a4 4 0 0 1 7-2M14 5v3h-3M13 11a4 4 0 0 1-6 1M7 15v-3h3" /><circle cx="16" cy="16" r="4.500" fill="#e81123" stroke="none" /></Icon>
          <Icon $w={20} $h={18}><g stroke="none"><circle cx="11" cy="6" r="6" fill="#8a8886" /><circle cx="5" cy="9" r="5" fill="#e1dfdd" /><path d="M4 6h12v8H4z" fill="#d2d0ce" /><circle cx="14.500" cy="12.500" r="5.500" fill="#fff" /></g><path d="M11.500 12a3 3 0 0 1 5.500-1.500M17.500 13a3 3 0 0 1-5.500 1.500" stroke="#1a73c9" strokeWidth="1.6" /></Icon>
        </TrayIcons>
        <Language>ENG</Language>
        <Clock>15:17<br />22-01-2024</Clock>
        <Notifications aria-label="Notifications"><Icon $w={21} $s={1.4}><path d="M1 1h19v15h-7l-3 3-3-3H1z" stroke="#fff" /></Icon></Notifications>
        <DesktopEdge />
      </Tray>
    </TaskbarShell>
  );
}

export default function App() {
  return (
    <Screen>
      <GlobalStyle />
      <Header />
      <RibbonArea />
      <Workspace>
        <LeftRail />
        <CanvasArea />
        <PageVisuals />
        <Visualizations />
      </Workspace>
      <StatusBar>Page 1 of 2</StatusBar>
      <Taskbar />
    </Screen>
  );
}
